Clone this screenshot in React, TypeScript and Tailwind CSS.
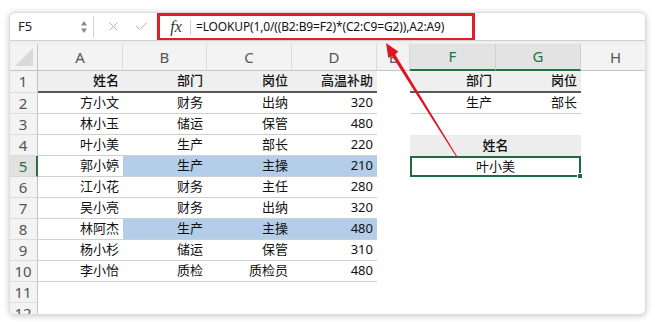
import { X, Check } from "lucide-react"

const people = [
    ["方小文", "财务", "出纳", "320"],
    ["林小玉", "储运", "保管", "480"],
    ["叶小美", "生产", "部长", "220"],
    ["郭小婷", "生产", "主操", "210"],
    ["江小花", "财务", "主任", "280"],
    ["吴小亮", "财务", "出纳", "320"],
    ["林阿杰", "生产", "主操", "480"],
    ["杨小杉", "储运", "保管", "310"],
    ["李小怡", "质检", "质检员", "480"],
]

// column widths: A B C D E F G H
const colW = ["w-[85px]", "w-[84px]", "w-[85px]", "w-[85px]", "w-[33px]", "w-[86px]", "w-[85px]", "w-[70px]"]

function RowHead({ n }: { n: number }) {
    const sel = n === 5
    return (
        <div
            className={
                sel
                    ? "w-[28px] shrink-0 flex items-center justify-center text-[15px] text-[#217346] bg-[#e1e1e1] border-b border-b-[#d6d6d6] border-r-2 border-r-[#217346]"
                    : "w-[28px] shrink-0 flex items-center justify-center text-[15px] text-[#555] bg-[#f3f3f3] border-b border-b-[#dcdcdc] border-r border-r-[#c4c4c4] pr-px"
            }
        >
            {n}
        </div>
    )
}

function Cell({ w, children, cls = "" }: { w: string; children?: React.ReactNode; cls?: string }) {
    return <div className={`${w} shrink-0 flex items-center ${cls}`}>{children}</div>
}

export default function App() {
    return (
        <div className="relative w-[655px] h-[325px] bg-white overflow-hidden" style={{ fontFamily: '"Noto Sans", "Noto Sans CJK SC", sans-serif' }}>
            <div className="ml-[9px] mt-[12px] w-[637px] h-[303px] rounded-[6px] overflow-hidden bg-white border border-[#dcdcdc] shadow-[0_1px_6px_rgba(0,0,0,0.22)] flex flex-col">
                {/* formula bar */}
                <div className="h-[27px] flex items-stretch shrink-0">
                    <div className="w-[83px] flex items-center pl-[8px] text-[13px] text-[#222]">
                        <span className="flex-1">F5</span>
                        <svg width="8" height="18" viewBox="0 0 8 18" className="mr-[5px]">
                            <path d="M4 3 L7 7.5 L1 7.5 Z" fill="#8a8a8a" />
                            <path d="M4 15 L7 10.5 L1 10.5 Z" fill="#8a8a8a" />
                        </svg>
                    </div>
                    <div className="w-px bg-[#d0d0d0] my-[3px]" />
                    <div className="w-[63px] flex items-center justify-around pl-[6px] pr-[2px] text-[#b3b3b3]">
                        <X size={15} strokeWidth={1.6} />
                        <Check size={15} strokeWidth={1.6} />
                    </div>
                    <div className="w-[318px] h-[28px] border-[3px] border-[#df1f26] flex items-center">
                        <span className="w-[30px] text-center italic text-[16px] text-[#333] pl-[2px]" style={{ fontFamily: '"Liberation Serif", serif' }}>
                            fx
                        </span>
                        <div className="w-px h-[15px] bg-[#cfcfcf]" />
                        <span className="pl-[5px] text-[12px] tracking-[-0.15px] text-[#111] whitespace-nowrap">=LOOKUP(1,0/((B2:B9=F2)*(C2:C9=G2)),A2:A9)</span>
                    </div>
                    <div className="flex-1" />
                </div>
                <div className="h-[4px] shrink-0 bg-[#efefef] border-t border-[#cfcfcf]" />

                {/* column headers */}
                <div className="h-[27px] flex shrink-0 text-[15px] text-[#555]">
                    <div className="w-[28px] shrink-0 bg-[#f3f3f3] border-r border-[#c4c4c4] border-b border-b-[#c4c4c4] flex items-end justify-end p-[4px]">
                        <svg width="18" height="18" viewBox="0 0 18 18">
                            <path d="M18 0 L18 18 L0 18 Z" fill="#d9d9d9" />
                        </svg>
                    </div>
                    {["A", "B", "C", "D", "E", "F", "G", "H"].map((c, i) => {
                        const sel = c === "F" || c === "G"
                        return (
                            <div
                                key={c}
                                className={
                                    sel
                                        ? `${colW[i]} shrink-0 flex items-center justify-center bg-[#e3e3e3] text-[#217346] border-r border-r-[#d0d0d0] border-b-2 border-b-[#217346]`
                                        : `${colW[i]} shrink-0 flex items-center justify-center bg-[#f3f3f3] border-r border-r-[#dadada] border-b border-b-[#c4c4c4]`
                                }
                            >
                                {c}
                            </div>
                        )
                    })}
                </div>

                {/* row 1 */}
                <div className="flex h-[22px] shrink-0 text-[13px] text-[#111]">
                    <RowHead n={1} />
                    {["姓名", "部门", "岗位", "高温补助"].map((t, i) => (
                        <Cell key={t} w={colW[i]} cls="justify-end pr-[4px] bg-[#efefef] font-medium border-b-2 border-[#595959]">
                            {t}
                        </Cell>
                    ))}
                    <Cell w={colW[4]} />
                    <Cell w={colW[5]} cls="justify-end pr-[4px] bg-[#efefef] font-medium border-b-2 border-[#595959]">部门</Cell>
                    <Cell w={colW[6]} cls="justify-end pr-[4px] bg-[#efefef] font-medium border-b-2 border-[#595959]">岗位</Cell>
                </div>

                {/* rows 2-10 */}
                {people.map((p, r) => {
                    const n = r + 2
                    const blue = n === 5 || n === 8
                    return (
                        <div key={n} className="flex h-[21px] shrink-0 text-[13px] text-[#111]">
                            <RowHead n={n} />
                            {p.map((t, i) => (
                                <Cell
                                    key={i}
                                    w={colW[i]}
                                    cls={`justify-end pr-[4px] border-b border-[#cfcfcf] ${blue && i > 0 ? "bg-[#b4cde8]" : ""}`}
                                >
                                    {t}
                                </Cell>
                            ))}
                            <Cell w={colW[4]} />
                            {n === 2 && (
                                <>
                                    <Cell w={colW[5]} cls="justify-end pr-[4px] border-b border-[#cfcfcf]">生产</Cell>
                                    <Cell w={colW[6]} cls="justify-end pr-[4px] border-b border-[#cfcfcf]">部长</Cell>
                                </>
                            )}
                            {n === 4 && (
                                <Cell w="w-[171px]" cls="justify-center bg-[#ededed] font-medium">姓名</Cell>
                            )}
                            {n === 5 && (
                                <div className="relative w-[171px] shrink-0 flex items-center justify-center border-2 border-[#1e6b41]">
                                    叶小美
                                    <div className="absolute -right-[4px] -bottom-[4px] w-[6px] h-[6px] bg-[#1e6b41] border border-white" />
                                </div>
                            )}
                        </div>
                    )
                })}

                {/* rows 11-12 */}
                {[11, 12].map((n) => (
                    <div key={n} className="flex h-[21px] shrink-0">
                        <RowHead n={n} />
                    </div>
                ))}
            </div>

            {/* red arrow */}
            <svg className="absolute left-0 top-0 pointer-events-none" width="655" height="325" viewBox="0 0 655 325">
                <polygon
                    points="386,43 398.5,51.7 394.9,54 457.4,156.7 456.6,157.3 391.9,55.8 388.3,58.1"
                    fill="#e0141e"
                />
            </svg>
        </div>
    )
}
